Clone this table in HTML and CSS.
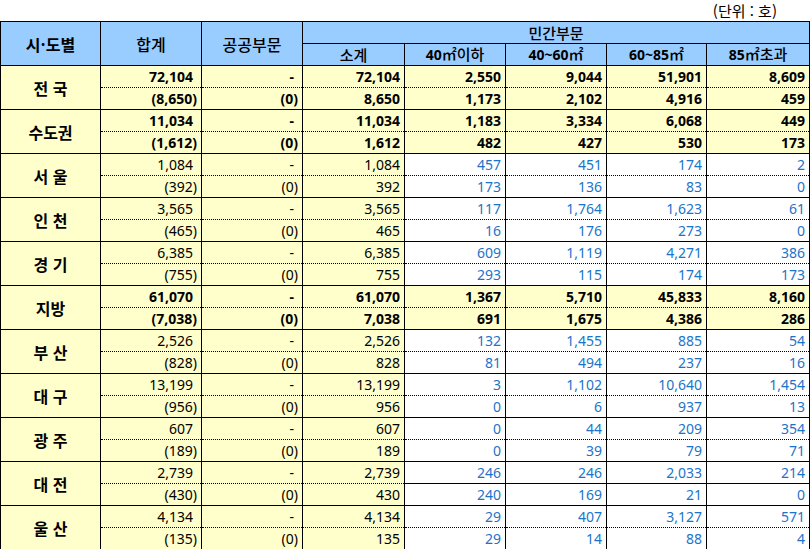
FILE: index.html
```html
<!DOCTYPE html>
<html lang="ko">
<head>
<meta charset="utf-8">
<title>주택 통계</title>
<link rel="stylesheet" href="styles.css">
</head>
<body>
<div class="unit">(단위 : 호)</div>
<table class="tbl">
<colgroup>
<col class="c0"><col class="c1"><col class="c2"><col class="c3"><col class="c4"><col class="c5"><col class="c6"><col class="c7">
</colgroup>
<thead>
<tr class="h1">
<th rowspan="2" class="hb">시·도별</th>
<th rowspan="2" class="big">합계</th>
<th rowspan="2" class="big">공공부문</th>
<th colspan="5">민간부문</th>
</tr>
<tr class="h2">
<th>소계</th>
<th><b>40</b>㎡이하</th>
<th><b>40~60</b>㎡</th>
<th><b>60~85</b>㎡</th>
<th><b>85</b>㎡초과</th>
</tr>
</thead>
<tbody>
<tr class="t sum"><td rowspan="2" class="name">전 국</td><td class="tot">72,104</td><td class="pub">-</td><td>72,104</td><td>2,550</td><td>9,044</td><td>51,901</td><td>8,609</td></tr>
<tr class="b sum"><td class="tot">(8,650)</td><td class="pub">(0)</td><td>8,650</td><td>1,173</td><td>2,102</td><td>4,916</td><td>459</td></tr>

<tr class="t sum"><td rowspan="2" class="name">수도권</td><td class="tot">11,034</td><td class="pub">-</td><td>11,034</td><td>1,183</td><td>3,334</td><td>6,068</td><td>449</td></tr>
<tr class="b sum"><td class="tot">(1,612)</td><td class="pub">(0)</td><td>1,612</td><td>482</td><td>427</td><td>530</td><td>173</td></tr>

<tr class="t"><td rowspan="2" class="name">서 울</td><td class="tot">1,084</td><td class="pub">-</td><td>1,084</td><td class="v">457</td><td class="v">451</td><td class="v">174</td><td class="v">2</td></tr>
<tr class="b"><td class="tot">(392)</td><td class="pub">(0)</td><td>392</td><td class="v">173</td><td class="v">136</td><td class="v">83</td><td class="v">0</td></tr>

<tr class="t"><td rowspan="2" class="name">인 천</td><td class="tot">3,565</td><td class="pub">-</td><td>3,565</td><td class="v">117</td><td class="v">1,764</td><td class="v">1,623</td><td class="v">61</td></tr>
<tr class="b"><td class="tot">(465)</td><td class="pub">(0)</td><td>465</td><td class="v">16</td><td class="v">176</td><td class="v">273</td><td class="v">0</td></tr>

<tr class="t"><td rowspan="2" class="name">경 기</td><td class="tot">6,385</td><td class="pub">-</td><td>6,385</td><td class="v">609</td><td class="v">1,119</td><td class="v">4,271</td><td class="v">386</td></tr>
<tr class="b"><td class="tot">(755)</td><td class="pub">(0)</td><td>755</td><td class="v">293</td><td class="v">115</td><td class="v">174</td><td class="v">173</td></tr>

<tr class="t sum"><td rowspan="2" class="name">지방</td><td class="tot">61,070</td><td class="pub">-</td><td>61,070</td><td>1,367</td><td>5,710</td><td>45,833</td><td>8,160</td></tr>
<tr class="b sum"><td class="tot">(7,038)</td><td class="pub">(0)</td><td>7,038</td><td>691</td><td>1,675</td><td>4,386</td><td>286</td></tr>

<tr class="t"><td rowspan="2" class="name">부 산</td><td class="tot">2,526</td><td class="pub">-</td><td>2,526</td><td class="v">132</td><td class="v">1,455</td><td class="v">885</td><td class="v">54</td></tr>
<tr class="b"><td class="tot">(828)</td><td class="pub">(0)</td><td>828</td><td class="v">81</td><td class="v">494</td><td class="v">237</td><td class="v">16</td></tr>

<tr class="t"><td rowspan="2" class="name">대 구</td><td class="tot">13,199</td><td class="pub">-</td><td>13,199</td><td class="v">3</td><td class="v">1,102</td><td class="v">10,640</td><td class="v">1,454</td></tr>
<tr class="b"><td class="tot">(956)</td><td class="pub">(0)</td><td>956</td><td class="v">0</td><td class="v">6</td><td class="v">937</td><td class="v">13</td></tr>

<tr class="t"><td rowspan="2" class="name">광 주</td><td class="tot">607</td><td class="pub">-</td><td>607</td><td class="v">0</td><td class="v">44</td><td class="v">209</td><td class="v">354</td></tr>
<tr class="b"><td class="tot">(189)</td><td class="pub">(0)</td><td>189</td><td class="v">0</td><td class="v">39</td><td class="v">79</td><td class="v">71</td></tr>

<tr class="t"><td rowspan="2" class="name">대 전</td><td class="tot">2,739</td><td class="pub">-</td><td>2,739</td><td class="v s">246</td><td class="v s">246</td><td class="v s">2,033</td><td class="v s">214</td></tr>
<tr class="b"><td class="tot">(430)</td><td class="pub">(0)</td><td>430</td><td class="v s">240</td><td class="v s">169</td><td class="v s">21</td><td class="v s">0</td></tr>

<tr class="t"><td rowspan="2" class="name">울 산</td><td class="tot">4,134</td><td class="pub">-</td><td>4,134</td><td class="v">29</td><td class="v">407</td><td class="v">3,127</td><td class="v">571</td></tr>
<tr class="b"><td class="tot">(135)</td><td class="pub">(0)</td><td>135</td><td class="v">29</td><td class="v">14</td><td class="v">88</td><td class="v">4</td></tr>
</tbody>
</table>
</body>
</html>
```

FILE: styles.css
```css
html, body {
  margin: 0;
  padding: 0;
  background: #ffffff;
}
body {
  font-family: "Noto Sans", "Noto Sans CJK KR", sans-serif;
  font-size: 14px;
  color: #000;
  overflow: hidden;
}
.unit {
  height: 21px;
  line-height: 21px;
  text-align: right;
  padding-right: 33px;
  font-family: "Noto Sans CJK KR", sans-serif;
  font-size: 15px;
  box-sizing: border-box;
  width: 810px;
}
.tbl {
  border-collapse: collapse;
  table-layout: fixed;
  width: 809px;
}
.c0 { width: 100px; }
.c1 { width: 101px; }
.c2 { width: 101px; }
.c3 { width: 102px; }
.c4 { width: 101px; }
.c5 { width: 101px; }
.c6 { width: 100px; }
.c7 { width: 103px; }
.tbl th, .tbl td {
  border: 1px solid #000;
  padding: 0 4px 0 0;
  height: 21px;
  line-height: 20px;
  white-space: nowrap;
  overflow: hidden;
}
.tbl th {
  background: #99ccff;
  font-family: "Noto Sans CJK KR", sans-serif;
  font-size: 15px;
  font-weight: 500;
  text-align: center;
  padding: 0;
}
.tbl th.big {
  font-size: 16px;
}
.tbl th b {
  font-family: "Noto Sans", sans-serif;
  font-size: 14px;
  font-weight: 700;
}
.tbl th.hb {
  font-size: 16px;
  font-weight: 700;
}
.tbl td {
  background: #ffffcc;
  text-align: right;
}
.tbl td.name {
  text-align: center;
  font-family: "Noto Sans CJK KR", sans-serif;
  font-size: 16px;
  font-weight: 700;
  padding: 0;
}
.tbl tr.t td.tot, .tbl tr.t td.pub {
  padding-right: 8px;
}
.tbl tr.sum td {
  font-weight: 700;
}
.tbl td.v {
  background: #ffffff;
  color: #1a74cc;
}
.tbl tr.t td {
  border-bottom: 1px dotted #000;
}
.tbl tr.b td {
  border-top: 1px dotted #000;
}
.tbl tr.t td.name {
  border-bottom: 1px solid #000;
}
.tbl tr.t td.s {
  border-bottom: 1px solid #000;
}
.tbl tr.b td.s {
  border-top: 1px solid #000;
}
```
